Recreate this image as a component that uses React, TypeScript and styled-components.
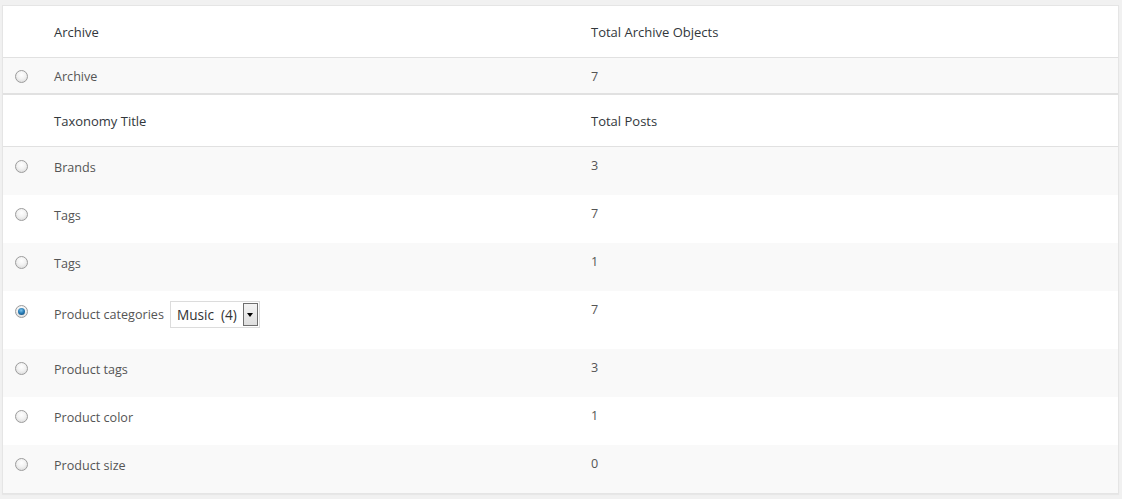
import React from "react";
import styled, { createGlobalStyle, css } from "styled-components";

const Global = createGlobalStyle`
  html, body { margin: 0; padding: 0; background: #f1f1f1; }
  body { font-family: "Open Sans", "Liberation Sans", sans-serif; }
`;

const Page = styled.div`
  padding: 5px 3px 6px 2px;
`;

const Panel = styled.div`
  background: #fff;
  border: 1px solid #e5e5e5;
  box-shadow: 0 1px 1px rgba(0, 0, 0, 0.04);
`;

const Row = styled.div<{ $striped?: boolean; $head?: boolean; $h: number; $sep?: number }>`
  display: grid;
  grid-template-columns: 51px 537px 1fr;
  height: ${(p) => p.$h}px;
  background: ${(p) => (p.$striped ? "#f9f9f9" : "#fff")};
  border-bottom: ${(p) => (p.$sep ? `${p.$sep}px solid #e1e1e1` : "none")};
  ${(p) =>
    p.$head
      ? css`
          align-items: center;
          color: #32373c;
          font-size: 13px;
        `
      : css`
          align-items: start;
          color: #555;
          font-size: 12.6px;
        `}
`;

const RadioCell = styled.div<{ $top: number }>`
  padding-left: 12px;
  padding-top: ${(p) => p.$top}px;
`;

const Radio = styled.span<{ $checked?: boolean }>`
  display: block;
  width: 11px;
  height: 11px;
  border-radius: 50%;
  border: 1px solid #9c9c9c;
  background: radial-gradient(circle at 50% 35%, #ffffff 0%, #f2f2f2 45%, #d4d4d4 100%);
  position: relative;
  ${(p) =>
    p.$checked &&
    css`
      &::after {
        content: "";
        position: absolute;
        left: 2px;
        top: 2px;
        width: 7px;
        height: 7px;
        border-radius: 50%;
        background: radial-gradient(circle at 45% 35%, #7fc4ec 0%, #2a7fb8 45%, #123f6a 100%);
      }
    `}
`;

const LabelCell = styled.div<{ $top?: number }>`
  display: flex;
  align-items: center;
  gap: 6px;
  padding-top: ${(p) => p.$top ?? 0}px;
  line-height: 20px;
  white-space: nowrap;
`;

const ValueCell = styled.div<{ $top?: number }>`
  padding-top: ${(p) => p.$top ?? 0}px;
  line-height: 18px;
`;

const Select = styled.div`
  display: flex;
  align-items: stretch;
  height: 27px;
  border: 1px solid #dcdcdc;
  background: #fff;
  box-sizing: border-box;
  width: 90px;
`;

const SelectText = styled.span`
  flex: 1;
  display: flex;
  align-items: center;
  padding-left: 6px;
  padding-top: 1px;
  font-size: 13.6px;
  color: #333;
  white-space: pre;
`;

const SelectButton = styled.span`
  width: 13px;
  margin: 1px;
  border: 1px solid #6f6f6f;
  background: linear-gradient(#f4f4f4, #dedede);
  display: flex;
  align-items: center;
  justify-content: center;
`;

const Arrow = styled.span`
  width: 0;
  height: 0;
  border-left: 3.5px solid transparent;
  border-right: 3.5px solid transparent;
  border-top: 4px solid #000;
`;

type Item = { label: string; value: string; select?: boolean; checked?: boolean };

const items: Item[] = [
  { label: "Brands", value: "3" },
  { label: "Tags", value: "7" },
  { label: "Tags", value: "1" },
  { label: "Product categories", value: "7", select: true, checked: true },
  { label: "Product tags", value: "3" },
  { label: "Product color", value: "1" },
  { label: "Product size", value: "0" },
];

export default function App() {
  return (
    <>
      <Global />
      <Page>
        <Panel>
          <Row $head $h={51} $sep={1}>
            <div />
            <LabelCell $top={1}>Archive</LabelCell>
            <ValueCell $top={1}>Total Archive Objects</ValueCell>
          </Row>
          <Row $striped $h={35} $sep={2}>
            <RadioCell $top={12}>
              <Radio />
            </RadioCell>
            <LabelCell $top={9}>Archive</LabelCell>
            <ValueCell $top={10}>7</ValueCell>
          </Row>
          <Row $head $h={51} $sep={1}>
            <div />
            <LabelCell $top={1}>Taxonomy Title</LabelCell>
            <ValueCell $top={1}>Total Posts</ValueCell>
          </Row>
          {items.map((it, i) => (
            <Row key={i} $striped={i % 2 === 0} $h={it.select ? 58 : 48}>
              <RadioCell $top={it.select ? 14 : 13}>
                <Radio $checked={it.checked} />
              </RadioCell>
              <LabelCell $top={it.select ? 10 : 11}>
                {it.label}
                {it.select && (
                  <Select>
                    <SelectText>{"Music  (4)"}</SelectText>
                    <SelectButton>
                      <Arrow />
                    </SelectButton>
                  </Select>
                )}
              </LabelCell>
              <ValueCell $top={10}>{it.value}</ValueCell>
            </Row>
          ))}
        </Panel>
      </Page>
    </>
  );
}
